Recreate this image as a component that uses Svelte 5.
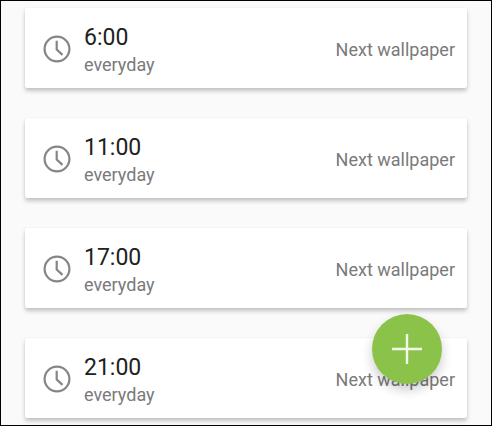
<script>
	let schedules = $state([
		{ id: 1, time: '6:00', repeat: 'everyday', action: 'Next wallpaper' },
		{ id: 2, time: '11:00', repeat: 'everyday', action: 'Next wallpaper' },
		{ id: 3, time: '17:00', repeat: 'everyday', action: 'Next wallpaper' },
		{ id: 4, time: '21:00', repeat: 'everyday', action: 'Next wallpaper' }
	]);

	const addSchedule = () => {
		schedules.push({
			id: schedules.length + 1,
			time: '12:00',
			repeat: 'everyday',
			action: 'Next wallpaper'
		});
	};
</script>

<main class="screen">
	<ul class="list">
		{#each schedules as item (item.id)}
			<li class="card">
				<svg class="clock" viewBox="0 0 28 28" aria-hidden="true">
					<circle cx="14" cy="13" r="12.4" />
					<path d="M13.7 4.7v8.8l5.8 5.4" />
				</svg>
				<div class="when">
					<span class="time">{item.time}</span>
					<span class="repeat">{item.repeat}</span>
				</div>
				<span class="action">{item.action}</span>
			</li>
		{/each}
	</ul>

	<button class="fab" onclick={addSchedule} aria-label="Add schedule">
		<svg viewBox="0 0 30 30" aria-hidden="true">
			<path d="M15 0v30M0 15h30" />
		</svg>
	</button>
</main>

<style>
	:global(body) {
		margin: 0;
	}

	.screen {
		box-sizing: border-box;
		min-height: 100vh;
		padding: 7px 24px 6px;
		border: 1px solid #000;
		background: #fafafa;
		font-family: Roboto, 'Noto Sans', sans-serif;
	}

	.list {
		display: flex;
		flex-direction: column;
		gap: 30px;
		margin: 0;
		padding: 0;
		list-style: none;
	}

	.card {
		display: flex;
		align-items: center;
		padding: 15px 12px 11px 18px;
		border-radius: 2px;
		background: #fff;
		box-shadow:
			0 3px 4px rgba(0, 0, 0, 0.22),
			0 0 2px rgba(0, 0, 0, 0.06);
	}

	.clock {
		flex: none;
		width: 28px;
		height: 28px;
		margin-right: 13px;
		overflow: visible;
		fill: none;
		stroke: #858585;
		stroke-width: 2.2;
	}

	.when {
		display: flex;
		flex: 1;
		flex-direction: column;
	}

	.time {
		color: #212121;
		font-size: 23px;
		line-height: 30px;
	}

	.repeat {
		color: #7a7a7a;
		font-size: 18px;
		line-height: 24px;
	}

	.action {
		color: #7a7a7a;
		font-size: 18px;
		line-height: 24px;
	}

	.fab {
		position: fixed;
		right: 50px;
		bottom: 42px;
		display: flex;
		align-items: center;
		justify-content: center;
		width: 70px;
		height: 70px;
		padding: 0;
		border: none;
		border-radius: 50%;
		background: #8bc34a;
		box-shadow: 0 6px 12px rgba(0, 0, 0, 0.2);
		cursor: pointer;
	}

	.fab svg {
		width: 30px;
		height: 30px;
		fill: none;
		stroke: #f4fae9;
		stroke-width: 2.4;
	}
</style>
